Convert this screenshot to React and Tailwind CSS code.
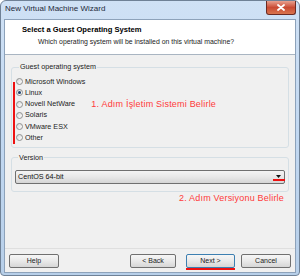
import React from "react";

const osList = [
  "Microsoft Windows",
  "Linux",
  "Novell NetWare",
  "Solaris",
  "VMware ESX",
  "Other",
];

function Radio({ checked }) {
  return (
    <span className="w-[7px] h-[7px] rounded-full border border-[#8e8f8f] bg-gradient-to-br from-[#d8d8d8] to-[#ffffff] flex items-center justify-center shrink-0">
      {checked && <span className="w-[3px] h-[3px] rounded-full bg-[#1b3f6b]" />}
    </span>
  );
}

function WinButton({ label, className = "", highlight = false }) {
  return (
    <div className={`relative h-[14px] ${className}`}>
      <div
        className={`h-full rounded-[2px] border ${
          highlight ? "border-[#3c7fb1]" : "border-[#707070]"
        } bg-gradient-to-b from-[#f6f6f6] via-[#e9e9e9] to-[#d6d6d6] flex items-center justify-center text-[7px] text-[#222]`}
      >
        {label}
      </div>
      {highlight && (
        <div className="absolute left-0 right-0 -bottom-[2px] h-[2px] bg-[#ee1111]" />
      )}
    </div>
  );
}

export default function App() {
  return (
    <div
      className="w-[300px] h-[278px] overflow-hidden bg-white"
      style={{ fontFamily: '"Liberation Sans", Arial, sans-serif' }}
    >
      {/* window frame */}
      <div className="w-full h-[276px] rounded-t-[6px] rounded-b-[4px] border border-[#6f8196] bg-gradient-to-b from-[#cfe1f5] via-[#c2d8f1] to-[#b7cfe9] flex flex-col">
        {/* Title bar */}
        <div className="h-[18px] flex items-start justify-between">
          <div className="pl-[4px] pt-[3px] text-[8px] text-[#1e2a3a] leading-[10px]">
            New Virtual Machine Wizard
          </div>
          <div className="mr-[3px] w-[30px] h-[14px] rounded-b-[3px] border border-t-0 border-[#6b2a22] bg-gradient-to-b from-[#e8a08f] via-[#c94a33] to-[#d9744d] flex items-center justify-center">
            <svg width="8" height="7" viewBox="0 0 8 7">
              <path d="M1 1 L7 6 M7 1 L1 6" stroke="#fff" strokeWidth="1.8" strokeLinecap="round" />
            </svg>
          </div>
        </div>

        {/* Client area */}
        <div className="mx-[3px] h-[254px] flex flex-col border border-[#8da2ba] bg-[#f0f0f0]">
          {/* Header */}
          <div className="h-[35px] bg-white border-b border-[#a9b5c2] pl-[17px] pt-[5px]">
            <div className="text-[7.6px] font-bold text-black leading-[10px]">
              Select a Guest Operating System
            </div>
            <div className="pl-[16px] pt-[2px] text-[6.9px] text-[#222] leading-[10px]">
              Which operating system will be installed on this virtual machine?
            </div>
          </div>

          {/* Body */}
          <div className="flex-1 px-[6px]">
            <fieldset className="mt-[7px] border border-[#d5dfe5] rounded-[3px] pl-[4px] pr-[4px] pb-[3px] relative">
              <legend className="ml-[3px] px-[1px] text-[7.2px] leading-[10px] text-[#222]">
                Guest operating system
              </legend>
              <div className="absolute left-[1px] top-[10px] w-[2px] h-[62px] bg-[#ee1111]" />
              <div className="flex">
                <div className="flex flex-col pt-[4px]">
                  {osList.map((os, i) => (
                    <div key={os} className="h-[11.25px] flex items-center gap-[2px]">
                      <Radio checked={i === 1} />
                      <span className="text-[7.2px] text-[#222] leading-[10px]">{os}</span>
                    </div>
                  ))}
                </div>
                <div className="ml-[6px] mt-[27px] text-[9px] leading-[10px] text-[#ff3a3a] tracking-[0.2px]">
                  1. Adım İşletim Sistemi Belirle
                </div>
              </div>
            </fieldset>

            <fieldset className="mt-[5px] border border-[#d5dfe5] rounded-[3px] px-[3px] pt-[7px] pb-[7px]">
              <legend className="ml-[3px] px-[1px] text-[7.2px] leading-[10px] text-[#222]">
                Version
              </legend>
              <div className="relative h-[14px] rounded-[2px] border border-[#707070] bg-gradient-to-b from-[#f4f4f4] via-[#e8e8e8] to-[#d5d5d5] flex items-center justify-between pl-[2px] pr-[3px]">
                <span className="text-[7.2px] text-[#111] leading-[10px]">CentOS 64-bit</span>
                <svg width="5" height="3" viewBox="0 0 5 3">
                  <path d="M0 0 H5 L2.5 3 Z" fill="#111" />
                </svg>
                <div className="absolute right-[-1px] bottom-[2px] w-[12px] h-[1.5px] bg-[#ee1111]" />
              </div>
            </fieldset>

            <div className="mt-[1px] pr-[5px] text-right text-[9px] leading-[10px] text-[#ff3a3a] tracking-[0.2px]">
              2. Adım Versiyonu Belirle
            </div>
          </div>

          {/* Footer */}
          <div className="h-[24px] border-t border-[#dfdfdf] px-[4px] pt-[5px] flex">
            <WinButton label="Help" className="w-[50px]" />
            <WinButton label="< Back" className="w-[46px] ml-auto" />
            <WinButton label="Next >" className="w-[49px] ml-[10px]" highlight />
            <WinButton label="Cancel" className="w-[50px] ml-[6px]" />
          </div>
        </div>
      </div>
    </div>
  );
}
